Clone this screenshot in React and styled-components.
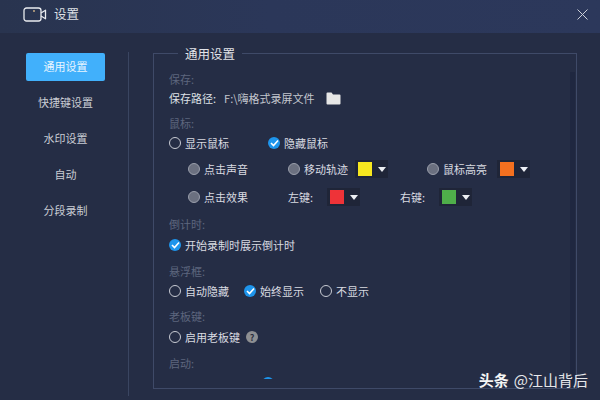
import React from "react";
import styled, { createGlobalStyle } from "styled-components";

const GlobalStyle = createGlobalStyle`
  html, body {
    margin: 0;
    padding: 0;
    background: #252d45;
    overflow: hidden;
  }
  * {
    box-sizing: border-box;
  }
`;

const Window = styled.div`
  position: relative;
  width: 600px;
  height: 400px;
  overflow: hidden;
  background: #252d45;
  color: #d9dbe1;
  font-family: "Noto Sans CJK SC", "Liberation Sans", sans-serif;
  font-size: 11px;
`;

const TitleBar = styled.header`
  display: flex;
  align-items: center;
  height: 33px;
  padding: 0 12px 5px 23px;
  background: linear-gradient(90deg, #29344f 0%, #2b3759 45%, #2c385b 100%);
`;

const WindowTitle = styled.span`
  margin-left: 7px;
  font-size: 12.5px;
  line-height: 14px;
  color: #dfe1e6;
`;

const CloseButton = styled.button`
  display: flex;
  margin-left: auto;
  padding: 0;
  border: 0;
  background: none;
`;

const Main = styled.div`
  display: flex;
  padding-top: 12px;
`;

const Sidebar = styled.nav`
  display: flex;
  flex-direction: column;
  gap: 8px;
  width: 129px;
  height: 344px;
  margin-top: 7px;
  padding: 1px 23px 0 26px;
  border-right: 1px solid #3a4561;
`;

const NavItem = styled.div`
  display: flex;
  align-items: center;
  justify-content: center;
  height: 28px;
  padding-bottom: 2px;
  border-radius: 2px;
  color: ${(p) => (p.$active ? "#e8f5ff" : "#c9ccd4")};
  background: ${(p) => (p.$active ? "#41b0fb" : "transparent")};
`;

const Panel = styled.fieldset`
  position: relative;
  width: 424px;
  height: 344px;
  margin: 0 0 0 24px;
  padding: 0 0 0 15px;
  border: 1px solid #3f4a68;
  min-inline-size: 0;
`;

const PanelTitle = styled.legend`
  height: 16px;
  margin-left: 9px;
  padding: 0 7px;
  font-size: 12.5px;
  line-height: 18px;
  color: #e2e4e9;
`;

const ScrollTrack = styled.div`
  position: absolute;
  top: 11px;
  right: 1px;
  bottom: 0;
  width: 5px;
  background: #1f2740;
`;

const Content = styled.div`
  height: 318px;
  padding-top: 8px;
  overflow: hidden;
`;

const Group = styled.section`
  margin-bottom: ${(p) => p.$after}px;
`;

const Heading = styled.div`
  display: flex;
  align-items: center;
  height: ${(p) => p.$height || 20}px;
  color: #5d667e;
`;

const Row = styled.div`
  display: flex;
  align-items: center;
  height: 20px;
`;

const SubRow = styled.div`
  display: flex;
  align-items: center;
  height: 28px;
  padding-left: 19px;
  margin-top: ${(p) => p.$top || 0}px;
`;

const PathLabel = styled.span`
  color: #dfe1e6;
`;

const PathValue = styled.span`
  margin-left: 8px;
  margin-right: 11px;
  color: #c3c6ce;
`;

const Option = styled.label`
  display: flex;
  align-items: center;
  gap: 4px;
  width: ${(p) => (p.$width ? `${p.$width}px` : "auto")};
  flex: none;
`;

const RadioOff = styled.span`
  display: block;
  flex: none;
  width: 12px;
  height: 12px;
  border: 1px solid #c8cbd3;
  border-radius: 50%;
`;

const RadioMuted = styled(RadioOff)`
  border-color: #9a9eab;
  background: #6b7080;
`;

const RadioOn = styled.span`
  display: flex;
  align-items: center;
  justify-content: center;
  flex: none;
  width: 12px;
  height: 12px;
  border-radius: 50%;
  background: #1e95ec;
`;

const KeyLabel = styled.span`
  flex: none;
  width: ${(p) => p.$width}px;
  color: #d9dbe1;
`;

const ColorPicker = styled.div`
  display: flex;
  align-items: center;
  flex: none;
  width: 33px;
  height: 18px;
  padding-left: 3px;
  background: #1f2538;
  margin-right: ${(p) => p.$after || 0}px;
`;

const Swatch = styled.span`
  display: block;
  width: 14px;
  height: 14px;
  background: ${(p) => p.$color};
`;

const Caret = styled.span`
  margin-left: 6px;
  border-left: 4px solid transparent;
  border-right: 4px solid transparent;
  border-top: 5px solid #eceef2;
`;

const HelpBadge = styled.span`
  display: flex;
  align-items: center;
  justify-content: center;
  width: 12px;
  height: 12px;
  margin-left: 6px;
  border-radius: 50%;
  background: #8e8f92;
  color: #2a2f3f;
  font-size: 9px;
  font-weight: 700;
`;

const Watermark = styled.div`
  position: absolute;
  right: 12px;
  bottom: 11px;
  display: flex;
  align-items: center;
  gap: 5px;
  font-size: 15px;
  line-height: 18px;
  color: #e6e7ea;
`;

const WatermarkBrand = styled.b`
  color: #f5f5f5;
  font-weight: 700;
`;

const CameraIcon = () => (
  <svg width="24" height="15" viewBox="0 0 24 15" fill="none">
    <rect x="1" y="1" width="17" height="13" rx="2.5" stroke="#e9ebef" strokeWidth="1.3" />
    <circle cx="11" cy="4" r="0.9" fill="#d9b98a" />
    <path d="M18 6 L22.5 3.2 V11.8 L18 9" stroke="#e9ebef" strokeWidth="1.3" strokeLinejoin="round" />
  </svg>
);

const CloseIcon = () => (
  <svg width="11" height="11" viewBox="0 0 11 11" fill="none">
    <path d="M0.5 0.5 L10.5 10.5 M10.5 0.5 L0.5 10.5" stroke="#cdd0d8" strokeWidth="1" />
  </svg>
);

const FolderIcon = () => (
  <svg width="15" height="13" viewBox="0 0 15 13">
    <path d="M0.5 1.5 Q0.5 0.5 1.5 0.5 H5.5 L7 2.5 H13.5 Q14.5 2.5 14.5 3.5 V11.5 Q14.5 12.5 13.5 12.5 H1.5 Q0.5 12.5 0.5 11.5 Z" fill="#e6e6e6" />
  </svg>
);

const CheckMark = () => (
  <svg width="9" height="8" viewBox="0 0 9 8" fill="none">
    <path d="M1 4 L3.5 6.5 L8 1.5" stroke="#ffffff" strokeWidth="1.6" />
  </svg>
);

const Checked = () => (
  <RadioOn>
    <CheckMark />
  </RadioOn>
);

const navItems = ["通用设置", "快捷键设置", "水印设置", "自动", "分段录制"];

export default function App() {
  return (
    <Window>
      <GlobalStyle />
      <TitleBar>
        <CameraIcon />
        <WindowTitle>设置</WindowTitle>
        <CloseButton>
          <CloseIcon />
        </CloseButton>
      </TitleBar>
      <Main>
        <Sidebar>
          {navItems.map((item, i) => (
            <NavItem key={item} $active={i === 0}>
              {item}
            </NavItem>
          ))}
        </Sidebar>
        <Panel>
          <PanelTitle>通用设置</PanelTitle>
          <ScrollTrack />
          <Content>
            <Group $after={5}>
              <Heading $height={19}>保存:</Heading>
              <Row>
                <PathLabel>保存路径:</PathLabel>
                <PathValue>F:\嗨格式录屏文件</PathValue>
                <FolderIcon />
              </Row>
            </Group>
            <Group $after={2}>
              <Heading>鼠标:</Heading>
              <Row>
                <Option $width={99}>
                  <RadioOff />
                  显示鼠标
                </Option>
                <Option>
                  <Checked />
                  隐藏鼠标
                </Option>
              </Row>
              <SubRow $top={2}>
                <Option $width={100}>
                  <RadioMuted />
                  点击声音
                </Option>
                <Option $width={67}>
                  <RadioMuted />
                  移动轨迹
                </Option>
                <ColorPicker $after={39}>
                  <Swatch $color="#f7e71f" />
                  <Caret />
                </ColorPicker>
                <Option $width={70}>
                  <RadioMuted />
                  鼠标高亮
                </Option>
                <ColorPicker>
                  <Swatch $color="#f4701f" />
                  <Caret />
                </ColorPicker>
              </SubRow>
              <SubRow>
                <Option $width={100}>
                  <RadioMuted />
                  点击效果
                </Option>
                <KeyLabel $width={39}>左键:</KeyLabel>
                <ColorPicker $after={40}>
                  <Swatch $color="#ee3338" />
                  <Caret />
                </ColorPicker>
                <KeyLabel $width={39}>右键:</KeyLabel>
                <ColorPicker>
                  <Swatch $color="#4fae4a" />
                  <Caret />
                </ColorPicker>
              </SubRow>
            </Group>
            <Group $after={6}>
              <Heading $height={22}>倒计时:</Heading>
              <Row>
                <Option>
                  <Checked />
                  开始录制时展示倒计时
                </Option>
              </Row>
            </Group>
            <Group $after={4}>
              <Heading>悬浮框:</Heading>
              <Row>
                <Option $width={75}>
                  <RadioOff />
                  自动隐藏
                </Option>
                <Option $width={76}>
                  <Checked />
                  始终显示
                </Option>
                <Option>
                  <RadioOff />
                  不显示
                </Option>
              </Row>
            </Group>
            <Group $after={5}>
              <Heading $height={22}>老板键:</Heading>
              <Row>
                <Option>
                  <RadioOff />
                  启用老板键
                </Option>
                <HelpBadge>?</HelpBadge>
              </Row>
            </Group>
            <Group $after={0}>
              <Heading $height={21}>启动:</Heading>
              <Row>
                <Option $width={93} />
                <Checked />
              </Row>
            </Group>
          </Content>
        </Panel>
      </Main>
      <Watermark>
        <WatermarkBrand>头条</WatermarkBrand>
        <span>@江山背后</span>
      </Watermark>
    </Window>
  );
}
